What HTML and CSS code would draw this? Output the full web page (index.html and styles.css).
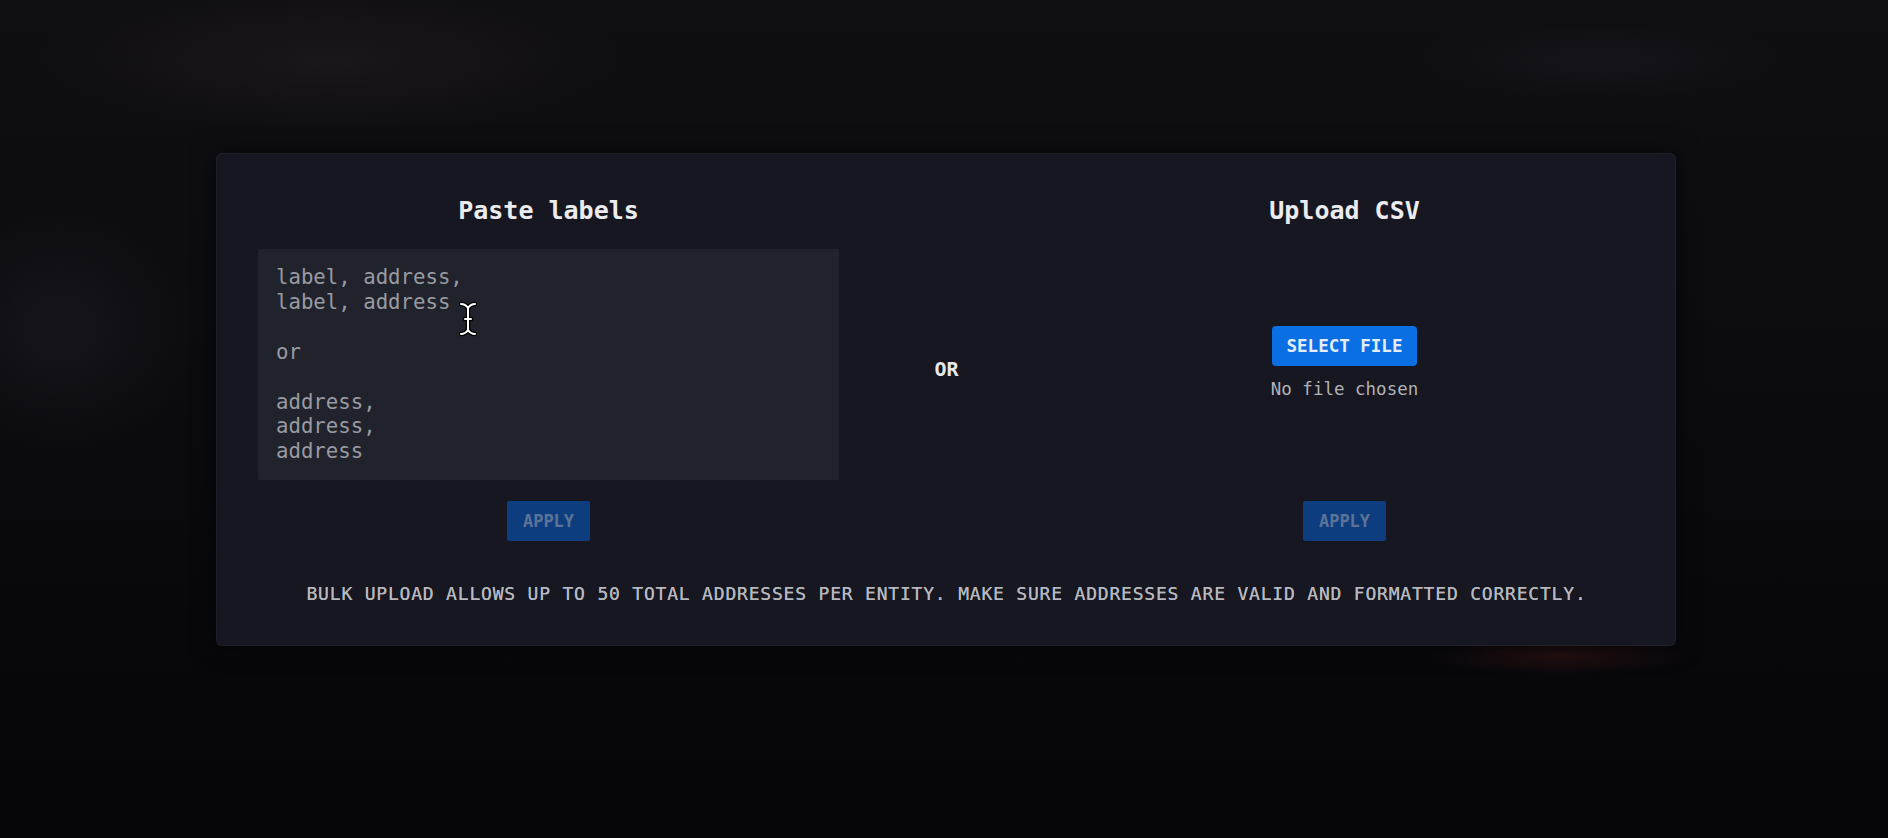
FILE: index.html
```html
<!DOCTYPE html>
<html lang="en">
<head>
<meta charset="utf-8">
<title>Bulk upload</title>
<link rel="stylesheet" href="styles.css">
</head>
<body>
  <div class="modal">
    <div class="columns">
      <section class="col">
        <h2 class="col-title">Paste labels</h2>
        <div class="paste-area">
          <div class="paste-text">label, address,
label, address

or

address,
address,
address</div>
          <svg class="ibeam" width="20" height="36" viewBox="0 0 20 36" aria-hidden="true">
            <g fill="none" stroke-linecap="round" stroke-linejoin="round">
              <path d="M3 3 C6 3 8 4 10 7 C12 4 14 3 17 3 M10 7 L10 29 C8 32 6 33 3 33 M10 29 C12 32 14 33 17 33 M7 18 L13 18" stroke="#000" stroke-width="4.5"/>
              <path d="M3 3 C6 3 8 4 10 7 C12 4 14 3 17 3 M10 7 L10 29 C8 32 6 33 3 33 M10 29 C12 32 14 33 17 33 M7 18 L13 18" stroke="#fff" stroke-width="2"/>
            </g>
          </svg>
        </div>
        <button class="btn btn-apply" disabled>APPLY</button>
      </section>

      <div class="or-col"><span class="or">OR</span></div>

      <section class="col">
        <h2 class="col-title">Upload CSV</h2>
        <div class="upload-area">
          <button class="btn btn-select">SELECT FILE</button>
          <div class="file-status">No file chosen</div>
        </div>
        <button class="btn btn-apply" disabled>APPLY</button>
      </section>
    </div>
    <p class="note">BULK UPLOAD ALLOWS UP TO 50 TOTAL ADDRESSES PER ENTITY. MAKE SURE ADDRESSES ARE VALID AND FORMATTED CORRECTLY.</p>
  </div>
</body>
</html>
```

FILE: styles.css
```css
* { box-sizing: border-box; }

html, body { height: 100%; }

body {
  margin: 0;
  padding: 153px 0 0 216px;
  font-family: "DejaVu Sans Mono", "Liberation Mono", monospace;
  background-color: #09090e;
  background-image:
    radial-gradient(ellipse 420px 110px at 330px 60px, rgba(40, 34, 40, 0.45), transparent 70%),
    radial-gradient(ellipse 200px 180px at 60px 330px, rgba(34, 32, 40, 0.45), transparent 70%),
    radial-gradient(ellipse 260px 60px at 1600px 60px, rgba(34, 32, 40, 0.35), transparent 70%),
    radial-gradient(ellipse 170px 26px at 1560px 656px, rgba(70, 24, 20, 0.45), transparent 75%),
    linear-gradient(180deg, #0f0e13 0%, #0b0b10 40%, #060609 100%);
  overflow: hidden;
}

.modal {
  width: 1460px;
  padding: 42px 40px 40px 41px;
  background: #161720;
  border: 1px solid rgba(255, 255, 255, 0.035);
  border-radius: 6px;
  box-shadow: 0 0 24px rgba(0, 0, 0, 0.5);
}

.columns {
  display: grid;
  grid-template-columns: 581px 1fr 581px;
}

.col {
  display: flex;
  flex-direction: column;
  align-items: center;
}

.col-title {
  margin: 0 0 24px;
  font-size: 25px;
  line-height: 29px;
  font-weight: bold;
  color: #ececef;
}

.paste-area {
  position: relative;
  width: 100%;
  height: 231px;
  padding: 16px 18px;
  background: #20222c;
  border-radius: 2px;
}

.paste-text {
  white-space: pre;
  font-size: 20.7px;
  line-height: 24.9px;
  color: #999ba2;
}

.ibeam {
  position: absolute;
  left: 200px;
  top: 52px;
}

.upload-area {
  height: 231px;
  padding-bottom: 4px;
  display: flex;
  flex-direction: column;
  align-items: center;
  justify-content: center;
}

.btn {
  font-family: inherit;
  border: none;
  height: 40px;
  font-weight: bold;
  cursor: pointer;
}

.btn-apply {
  margin-top: 21px;
  padding: 0 16px;
  font-size: 17px;
  background: #0e3d7f;
  color: #5c7398;
  border-radius: 2px;
}

.btn-select {
  padding: 0 14.5px;
  font-size: 17.5px;
  background: #0a6fe2;
  color: #e4edf9;
  border-radius: 4px;
}

.file-status {
  margin-top: 13px;
  font-size: 17.5px;
  line-height: 21px;
  color: #b2b3b8;
}

.or-col {
  display: flex;
  align-items: center;
  justify-content: center;
}

.or {
  font-size: 20px;
  line-height: 24px;
  font-weight: bold;
  color: #e8e8eb;
}

.note {
  margin: 42px 0 0;
  text-align: center;
  font-size: 18px;
  line-height: 22px;
  letter-spacing: 0.8px;
  color: #b7b8bf;
  text-shadow: 0 0 0.4px #b7b8bf;
}
```
